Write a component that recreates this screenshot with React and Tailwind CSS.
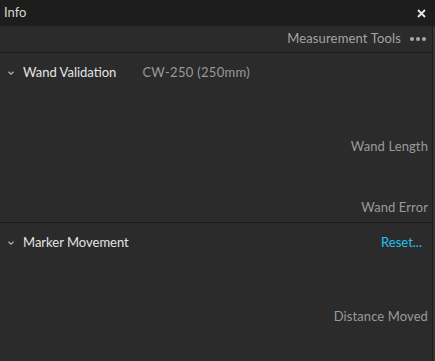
import { useState } from 'react';

function Chevron() {
  return (
    <svg width="8" height="8" viewBox="0 0 8 8" className="text-[#b4b4b4]">
      <path d="M1.5 2.8 L4 5.2 L6.5 2.8" fill="none" stroke="currentColor" strokeWidth="1.2" />
    </svg>
  );
}

function Section({ title, extra, action, rows, last }) {
  const [open, setOpen] = useState(true);
  return (
    <div className={last ? '' : 'border-b border-[#1c1c1c]'}>
      <div className="flex items-center h-[40px] pl-[4px] pr-[10px]">
        <button onClick={() => setOpen(!open)} className="w-[14px] flex justify-center">
          <Chevron />
        </button>
        <span className="ml-[5px] text-[#e4e4e4] font-normal">{title}</span>
        {extra && <span className="ml-[26px] text-[#9a9a9a] tracking-[0.3px]">{extra}</span>}
        <div className="flex-1" />
        {action && <span className="text-[#22c4f0]">{action}</span>}
      </div>
      {open && (
        <div className="pr-[4px] pb-[7px]">
          {rows.map((r) => (
            <div key={r} className="text-right text-[#9a9a9a] mt-[45px] leading-[16px] tracking-[0.1px]">{r}</div>
          ))}
        </div>
      )}
    </div>
  );
}

export default function App() {
  return (
    <div className="w-[435px] h-[361px] bg-[#2b2b2b] text-[13px] flex flex-col overflow-hidden" style={{ fontFamily: 'Lato, "Open Sans", sans-serif' }}>
      <div className="h-[26px] bg-[#1d1d1d] flex items-center px-[4px] text-[#d6d6d6] shrink-0">
        <span className="text-[13px]">Info</span>
        <div className="flex-1" />
        <svg width="9" height="9" viewBox="0 0 9 9" className="mr-[5px]">
          <path d="M1 1 L8 8 M8 1 L1 8" stroke="#e8e8e8" strokeWidth="1.8" />
        </svg>
      </div>
      <div className="flex flex-1">
        <div className="flex-1 flex flex-col">
          <div className="h-[27px] border-b border-[#1c1c1c] flex items-center justify-end pr-[6px] text-[#a3a3a3] shrink-0">
            <span className="tracking-[0.15px]">Measurement Tools</span>
            <span className="ml-[9px] flex gap-[2px]">
              <span className="w-[4px] h-[4px] rounded-full bg-[#a8a8a8]" />
              <span className="w-[4px] h-[4px] rounded-full bg-[#a8a8a8]" />
              <span className="w-[4px] h-[4px] rounded-full bg-[#a8a8a8]" />
            </span>
          </div>
          <Section title="Wand Validation" extra="CW-250 (250mm)" rows={['Wand Length', 'Wand Error']} />
          <Section title="Marker Movement" action="Reset..." rows={['Distance Moved']} last />
        </div>
        <div className="w-[3px] border-l border-[#1e1e1e] bg-[#333333]" />
      </div>
    </div>
  );
}
